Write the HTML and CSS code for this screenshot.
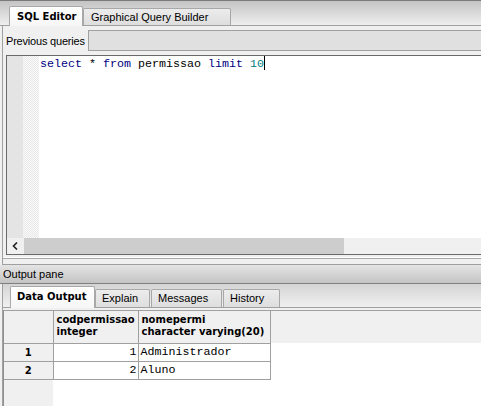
FILE: index.html
```html
<!DOCTYPE html>
<html>
<head>
<meta charset="utf-8">
<link rel="stylesheet" href="styles.css">
</head>
<body>
<div class="app">
  <div class="tabbar top-tabs">
    <div class="tab active sql">SQL Editor</div>
    <div class="tab gqb">Graphical Query Builder</div>
  </div>
  <div class="panel">
    <div class="prev-row">
      <span class="label">Previous queries</span>
      <div class="combo"></div>
    </div>
    <div class="editor">
      <div class="editor-body">
        <div class="gutter"></div>
        <div class="fold"></div>
        <div class="code"><span class="kw">select</span> * <span class="kw">from</span> permissao <span class="kw">limit</span> <span class="num">10</span><span class="caret"></span></div>
      </div>
      <div class="hscroll">
        <div class="arrow"><svg width="7" height="8" viewBox="0 0 7 8"><path d="M5 0.5 L1.5 4 L5 7.5" fill="none" stroke="#222" stroke-width="1.6"/></svg></div>
        <div class="thumb"></div>
        <div class="track"></div>
      </div>
    </div>
  </div>
  <div class="splitter"></div>
  <div class="outhead">Output pane</div>
  <div class="outarea">
    <div class="tabbar out-tabs">
      <div class="tab active t-data">Data Output</div>
      <div class="tab t-explain">Explain</div>
      <div class="tab t-msg">Messages</div>
      <div class="tab t-hist">History</div>
    </div>
    <div class="gridwrap">
      <table class="grid">
        <colgroup><col class="c0"><col class="c1"><col class="c2"><col></colgroup>
        <thead>
          <tr><th class="corner"></th><th>codpermissao<br>integer</th><th>nomepermi<br>character varying(20)</th><th class="filler"></th></tr>
        </thead>
        <tbody>
          <tr><td class="rh">1</td><td class="num">1</td><td class="txt">Administrador</td><td class="filler"></td></tr>
          <tr><td class="rh">2</td><td class="num">2</td><td class="txt">Aluno</td><td class="filler"></td></tr>
        </tbody>
      </table>
    </div>
  </div>
</div>
</body>
</html>
```
FILE: styles.css
```css
* { box-sizing: border-box; }
html, body { margin: 0; padding: 0; }
body {
  width: 481px; height: 406px; overflow: hidden;
  font-family: "Liberation Sans", Arial, sans-serif;
  font-size: 11px; color: #000; background: #f0f0f0;
}
.app { width: 481px; height: 406px; display: flex; flex-direction: column; }

.tabbar { display: flex; align-items: flex-end; }
.tab {
  border: 1px solid #a8a8a8; border-bottom: none;
  border-radius: 2px 2px 0 0;
  background: linear-gradient(#f2f2f2, #dcdcdc);
  white-space: nowrap;
}
.tab.active {
  background: linear-gradient(#ffffff, #f6f6f6);
  font-family: "DejaVu Sans", Verdana, sans-serif; font-size: 10px; font-weight: bold;
  position: relative;
}

.top-tabs {
  height: 26px;
  border-top: 1px solid #7a7a7a;
  background: linear-gradient(#c4c4c4, #eeeeee);
  border-bottom: 1px solid #a0a0a0;
  padding-left: 9px;
}
.top-tabs .tab.sql { height: 20px; width: 74px; padding: 4px 0 0 7px; margin-bottom: -1px; }
.top-tabs .tab.gqb { height: 17px; width: 148px; padding: 2px 0 0 7px; background: linear-gradient(#ececec, #dedede); }

.panel { border-left: 1px solid #a0a0a0; margin-left: 2px; background: #f0f0f0; }
.prev-row { display: flex; align-items: center; height: 29px; padding-top: 4px; padding-bottom: 4px; }
.label { padding-left: 3px; width: 85px; letter-spacing: -0.2px; white-space: nowrap; }
.combo { flex: 1; height: 21px; border: 1px solid #a0a0a0; border-right: none; background: #e0e0e0; }

.editor {
  margin-left: 3px; height: 200px;
  border-top: 1px solid #6a6a6a; border-left: 1px solid #6a6a6a; border-bottom: 1px solid #6a6a6a;
  display: flex; flex-direction: column; background: #fff;
}
.editor-body { flex: 1; display: flex; }
.gutter { width: 16px; background: #e4e4e4; }
.fold {
  width: 16px;
  background-color: #f4f4f4;
  background-image: repeating-conic-gradient(#e8e8e8 0 25%, #fafafa 0 50%);
  background-size: 2px 2px;
}
.code {
  flex: 1; padding-left: 1px;
  font-family: "Liberation Mono", "Courier New", monospace; font-size: 11.67px;
  line-height: 16px; white-space: pre; color: #000;
}
.code .kw { color: #00007f; }
.code .num { color: #007f7f; }
.caret { display: inline-block; width: 1px; height: 14px; background: #000; vertical-align: -3px; }

.hscroll { height: 16px; display: flex; }
.arrow { width: 17px; background: #f0f0f0; display: flex; align-items: center; justify-content: center; }
.thumb { width: 320px; background: #cdcdcd; }
.track { flex: 1; background: #f0f0f0; }

.splitter {
  height: 10px; margin-left: 2px; border-left: 1px solid #a0a0a0;
  background: linear-gradient(#f0f0f0 0 2px, #ffffff 2px 3px, #a8a8a8 3px 4px, #f0f0f0 4px 9px, #a0a0a0 9px 10px);
}
.outhead {
  height: 19px; padding: 3px 0 0 3px;
  background: linear-gradient(#e4e4e4, #c4c4c4);
  border-bottom: 1px solid #808080;
}
.outarea { flex: 1; display: flex; flex-direction: column; margin-left: 2px; border-left: 1px solid #a0a0a0; }
.out-tabs {
  height: 24px; padding-left: 7px;
  background: linear-gradient(#d4d4d4, #f0f0f0);
  border-bottom: 1px solid #a0a0a0;
}
.out-tabs .tab { height: 18px; padding: 2px 0 0 6px; background: linear-gradient(#ececec, #dedede); }
.out-tabs .tab.active { height: 22px; padding: 4px 0 0 6px; margin-bottom: -1px; background: linear-gradient(#ffffff, #f6f6f6); }
.t-data { width: 85px; }
.t-explain { width: 55px; }
.t-msg { width: 71px; margin-left: 1px; }
.t-hist { width: 57px; margin-left: 1px; }

.gridwrap {
  flex: 1; margin-top: 2px; border-top: 1px solid #a0a0a0;
  border-left: 1px solid #909090;
  background: linear-gradient(to right, #f0f0f0 49px, #ffffff 49px);
}
.grid { border-collapse: collapse; width: 100%; table-layout: fixed; }
.grid col.c0 { width: 49px; }
.grid col.c1 { width: 85px; }
.grid col.c2 { width: 132px; }
.grid th, .grid td { border: 1px solid #a0a0a0; padding: 0; }
.grid tr:first-child th { border-top: none; }
.grid th:first-child, .grid td:first-child { border-left: none; }
.grid thead th {
  height: 32px; background: #f0f0f0; text-align: left;
  font-family: "DejaVu Sans", Verdana, sans-serif; font-size: 10px; font-weight: bold;
  vertical-align: top; padding: 3px 0 0 3px; line-height: 12px; white-space: nowrap; overflow: hidden;
}
.grid thead th.corner { padding: 0; }
.grid .filler { border: none; }
.grid thead th.filler { background: #f0f0f0; border-bottom: none; }
.grid tbody td { height: 18px; background: #fff; }
.grid tbody td.filler { background: #fff; }
.grid td.rh {
  background: #f0f0f0; text-align: center;
  font-family: "DejaVu Sans", Verdana, sans-serif; font-size: 10px; font-weight: bold;
}
.grid td.num, .grid td.txt {
  font-family: "Liberation Mono", "Courier New", monospace; font-size: 11.67px;
}
.grid td.num { text-align: right; padding-right: 1px; }
.grid td.txt { padding-left: 2px; }
```
